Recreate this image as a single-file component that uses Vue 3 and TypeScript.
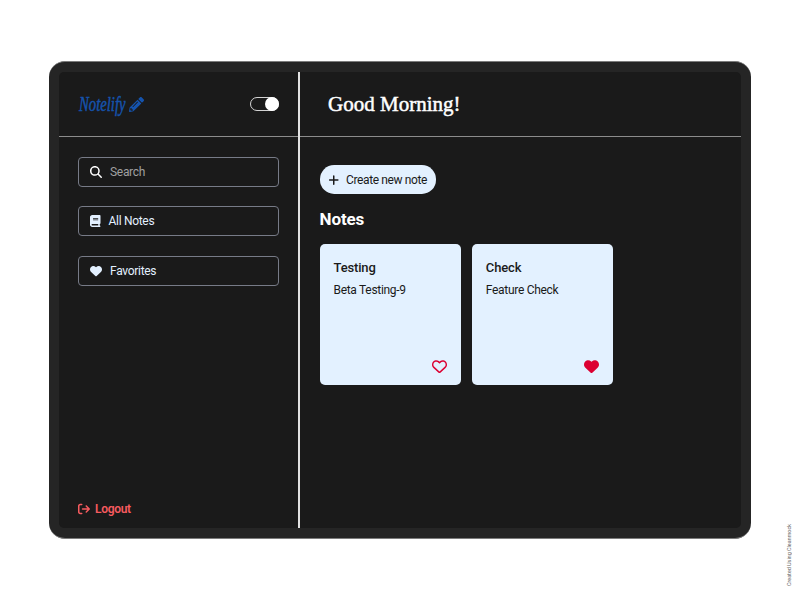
<script setup lang="ts">
import { ref } from 'vue'

interface Note {
  title: string
  body: string
  favorite: boolean
}

const icons = {
  pencil:
    'M497.9 142.1l-46.1 46.1c-4.7 4.7-12.3 4.7-17 0l-111-111c-4.7-4.7-4.7-12.3 0-17l46.1-46.1c18.7-18.7 49.1-18.7 67.9 0l60.1 60.1c18.8 18.7 18.8 49.1 0 67.9zM284.2 99.8L21.6 362.4.4 483.9c-2.9 16.4 11.4 30.6 27.8 27.8l121.5-21.3 262.6-262.6c4.7-4.7 4.7-12.3 0-17l-111-111c-4.8-4.7-12.4-4.7-17.1 0zM124.1 339.9c-5.5-5.5-5.5-14.3 0-19.8l154-154c5.5-5.5 14.3-5.5 19.8 0s5.5 14.3 0 19.8l-154 154c-5.5 5.5-14.3 5.5-19.8 0zM88 424h48v36.3l-64.5 11.3-31.1-31.1L51.7 376H88v48z',
  search:
    'M416 208c0 45.9-14.9 88.3-40 122.7L502.6 457.4c12.5 12.5 12.5 32.8 0 45.3s-32.8 12.5-45.3 0L330.7 376c-34.4 25.2-76.8 40-122.7 40C93.1 416 0 322.9 0 208S93.1 0 208 0S416 93.1 416 208zM208 352a144 144 0 1 0 0-288 144 144 0 1 0 0 288z',
  book: 'M96 0C43 0 0 43 0 96V416c0 53 43 96 96 96H384h32c17.7 0 32-14.3 32-32s-14.3-32-32-32V384c17.7 0 32-14.3 32-32V32c0-17.7-14.3-32-32-32H384 96zm0 384H352v64H96c-17.7 0-32-14.3-32-32s14.3-32 32-32zm32-240c0-8.8 7.2-16 16-16H336c8.8 0 16 7.2 16 16s-7.2 16-16 16H144c-8.8 0-16-7.2-16-16zm16 48H336c8.8 0 16 7.2 16 16s-7.2 16-16 16H144c-8.8 0-16-7.2-16-16s7.2-16 16-16z',
  heart:
    'M47.6 300.4L228.3 469.1c7.5 7 17.4 10.9 27.7 10.9s20.2-3.9 27.7-10.9L464.4 300.4c30.4-28.3 47.6-68 47.6-109.5v-5.8c0-69.9-50.5-129.5-119.4-141C347 36.5 300.6 51.4 268 84L256 96 244 84c-32.6-32.6-79-47.5-124.6-39.9C50.5 55.6 0 115.2 0 185.1v5.8c0 41.5 17.2 81.2 47.6 109.5z',
  heartOutline:
    'M225.8 468.2l-2.5-2.3L48.1 303.2C17.4 274.7 0 234.7 0 192.8v-3.3c0-70.4 50-130.8 119.2-144C158.6 37.9 198.9 47 231 69.6c9 6.4 17.4 13.8 25 22.3c4.2-4.8 8.7-9.2 13.5-13.3c3.7-3.2 7.5-6.2 11.5-9C313.1 47 353.4 37.9 392.8 45.4C462 58.6 512 119.1 512 189.5v3.3c0 41.9-17.4 81.9-48.1 110.4L288.7 465.9l-2.5 2.3c-8.2 7.6-19 11.9-30.2 11.9s-22-4.2-30.2-11.9zM239.1 145c-.4-.3-.7-.7-1-1.1l-17.8-20-.1-.1c-23.1-25.9-58-37.7-92-31.2C81.6 101.5 48 142.1 48 189.5v3.3c0 28.5 11.9 55.8 32.8 75.2L256 430.7 431.2 268c20.9-19.4 32.8-46.7 32.8-75.2v-3.3c0-47.3-33.6-88-80.1-96.9c-34-6.5-69 5.4-92 31.2l-.2 .2-17.8 20c-.3 .4-.7 .7-1 1.1c-4.5 4.5-10.6 7-16.9 7s-12.4-2.5-16.9-7z',
  plus: 'M256 80c0-17.7-14.3-32-32-32s-32 14.3-32 32V224H48c-17.7 0-32 14.3-32 32s14.3 32 32 32H192V432c0 17.7 14.3 32 32 32s32-14.3 32-32V288H400c17.7 0 32-14.3 32-32s-14.3-32-32-32H256V80z',
  logout:
    'M502.6 278.6c12.5-12.5 12.5-32.8 0-45.3l-128-128c-12.5-12.5-32.8-12.5-45.3 0s-12.5 32.8 0 45.3L402.7 224 192 224c-17.7 0-32 14.3-32 32s14.3 32 32 32l210.7 0-73.4 73.4c-12.5 12.5-12.5 32.8 0 45.3s32.8 12.5 45.3 0l128-128zM160 96c17.7 0 32-14.3 32-32s-14.3-32-32-32L96 32C43 32 0 75 0 128L0 384c0 53 43 96 96 96l64 0c17.7 0 32-14.3 32-32s-14.3-32-32-32l-64 0c-17.7 0-32-14.3-32-32l0-256c0-17.7 14.3-32 32-32l64 0z',
}

const dark = ref(true)
const notes = ref<Note[]>([
  { title: 'Testing', body: 'Beta Testing-9', favorite: false },
  { title: 'Check', body: 'Feature Check', favorite: true },
])
</script>

<template>
  <div class="page">
    <div class="device">
      <div class="screen">
        <aside class="sidebar">
          <div class="brand-bar">
            <div class="brand">
              <svg class="wordmark" viewBox="0 0 50 24">
                <text x="1" y="18.5" textLength="46.5" lengthAdjust="spacingAndGlyphs">Notelify</text>
              </svg>
              <svg class="pencil" viewBox="0 0 512 512"><path :d="icons.pencil" /></svg>
            </div>
            <button class="toggle" :class="{ on: dark }" @click="dark = !dark"><span class="knob"></span></button>
          </div>
          <nav class="menu">
            <div class="item search">
              <svg class="icon" viewBox="0 0 512 512"><path :d="icons.search" /></svg>
              <span>Search</span>
            </div>
            <div class="item">
              <svg class="icon book" viewBox="0 0 448 512"><path :d="icons.book" /></svg>
              <span>All Notes</span>
            </div>
            <div class="item">
              <svg class="icon" viewBox="0 0 512 512"><path :d="icons.heart" /></svg>
              <span>Favorites</span>
            </div>
          </nav>
          <div class="logout">
            <svg class="logout-icon" viewBox="0 0 512 512"><path :d="icons.logout" /></svg>
            <span>Logout</span>
          </div>
        </aside>
        <main class="main">
          <header class="greeting">
            <svg class="greeting-text" viewBox="0 0 140 32">
              <text x="1" y="23" textLength="132.5" lengthAdjust="spacingAndGlyphs">Good Morning!</text>
            </svg>
          </header>
          <section class="content">
            <button class="create">
              <svg class="plus" viewBox="0 0 448 512"><path :d="icons.plus" /></svg>
              <span>Create new note</span>
            </button>
            <h2>Notes</h2>
            <div class="notes">
              <article v-for="note in notes" :key="note.title" class="note">
                <h3>{{ note.title }}</h3>
                <p>{{ note.body }}</p>
                <svg class="fav" viewBox="0 0 512 512" @click="note.favorite = !note.favorite">
                  <path :d="note.favorite ? icons.heart : icons.heartOutline" />
                </svg>
              </article>
            </div>
          </section>
        </main>
      </div>
    </div>
    <div class="credit">Created Using Cleanmock</div>
  </div>
</template>

<style>
body {
  background: #fff;
}
</style>

<style scoped>
* {
  box-sizing: border-box;
}
.page {
  position: relative;
  width: 800px;
  height: 600px;
  overflow: hidden;
  padding: 61px 49px;
  font-family: Roboto, 'Liberation Sans', sans-serif;
  background: #fff;
}
.device {
  height: 478px;
  padding: 10px;
  border-top: 1px solid #7c7c7c;
  border-bottom: 1px solid #7c7c7c;
  border-radius: 16px;
  background: #252525;
}
.screen {
  display: flex;
  height: 456px;
  border-radius: 5px;
  overflow: hidden;
  background: #1a1a1a;
}
svg {
  display: block;
  fill: currentColor;
}
button {
  font: inherit;
  border: 0;
  padding: 0;
}
.sidebar {
  display: flex;
  flex-direction: column;
  width: 241px;
  border-right: 2px solid #e2e2e2;
}
.brand-bar {
  display: flex;
  align-items: center;
  justify-content: space-between;
  height: 65px;
  padding: 0 19px;
  border-bottom: 1px solid #8c8c8c;
}
.brand {
  display: flex;
  align-items: center;
  gap: 1px;
  color: #1553ac;
}
.wordmark {
  width: 50px;
  height: 24px;
  overflow: visible;
}
.wordmark text {
  font-family: 'Liberation Serif', serif;
  font-size: 20px;
  font-style: italic;
  stroke: currentColor;
  stroke-width: 0.5px;
}
.pencil {
  width: 15px;
  height: 15px;
  margin-top: 1px;
}
.toggle {
  display: flex;
  align-items: center;
  width: 29px;
  height: 14px;
  border: 1px solid #d4d4d4;
  border-radius: 8px;
  background: transparent;
}
.toggle.on {
  justify-content: flex-end;
}
.knob {
  width: 14px;
  height: 14px;
  margin-right: -1px;
  border-radius: 50%;
  background: #fff;
  flex: none;
}
.menu {
  display: flex;
  flex-direction: column;
  gap: 19.3px;
  padding: 20px 19px 0 19px;
}
.item {
  display: flex;
  align-items: center;
  gap: 8px;
  height: 30px;
  padding-left: 11px;
  border: 1px solid #777b87;
  border-radius: 4px;
  font-size: 12px;
  letter-spacing: -0.3px;
  color: #e3f0ff;
}
.search {
  color: #fff;
}
.search span {
  color: #a0a0a0;
}
.icon {
  width: 12px;
  height: 12px;
}
.book {
  width: 10.5px;
}
.logout {
  display: flex;
  align-items: center;
  gap: 5px;
  margin-top: auto;
  padding: 0 0 11px 19px;
  font-size: 12px;
  line-height: 16px;
  font-weight: 600;
  letter-spacing: -0.3px;
  color: #f75b5f;
}
.logout-icon {
  width: 12px;
  height: 12px;
}
.main {
  flex: 1;
}
.greeting {
  display: flex;
  align-items: center;
  height: 65px;
  padding-left: 27px;
  border-bottom: 1px solid #8c8c8c;
  color: #fff;
}
.greeting-text {
  width: 140px;
  height: 32px;
  overflow: visible;
}
.greeting-text text {
  font-family: 'Liberation Serif', serif;
  font-size: 22px;
  stroke: currentColor;
  stroke-width: 0.5px;
}
.content {
  padding: 28.4px 19.5px;
}
.create {
  display: flex;
  align-items: center;
  gap: 7px;
  width: 116.5px;
  height: 28.2px;
  padding: 1px 0 0 8px;
  border-radius: 14.1px;
  background: #e3f1ff;
  color: #1a1a1a;
  font-size: 12px;
  letter-spacing: -0.38px;
  white-space: nowrap;
}
.plus {
  width: 11.5px;
  height: 12px;
  flex: none;
}
h2 {
  margin: 14.4px 0 14.2px;
  font-size: 17px;
  line-height: 22px;
  font-weight: 700;
  letter-spacing: -0.1px;
  color: #fff;
}
.notes {
  display: flex;
  gap: 11px;
}
.note {
  display: flex;
  flex-direction: column;
  width: 141.3px;
  height: 140.8px;
  padding: 16px 14px 11px;
  border-radius: 5px;
  background: #e3f1ff;
  color: #1a1a1a;
}
h3 {
  margin: 0;
  font-size: 13px;
  line-height: 16px;
  font-weight: 500;
  letter-spacing: -0.15px;
}
.note p {
  margin: 5.5px 0 0;
  font-size: 12px;
  line-height: 16px;
  letter-spacing: -0.3px;
}
.fav {
  width: 15px;
  height: 15px;
  margin-top: auto;
  align-self: flex-end;
  color: #dc0032;
}
.credit {
  position: absolute;
  right: 7px;
  bottom: 14px;
  writing-mode: vertical-rl;
  transform: rotate(180deg);
  font-size: 5.4px;
  line-height: 7px;
  white-space: nowrap;
  color: #666;
}
</style>
